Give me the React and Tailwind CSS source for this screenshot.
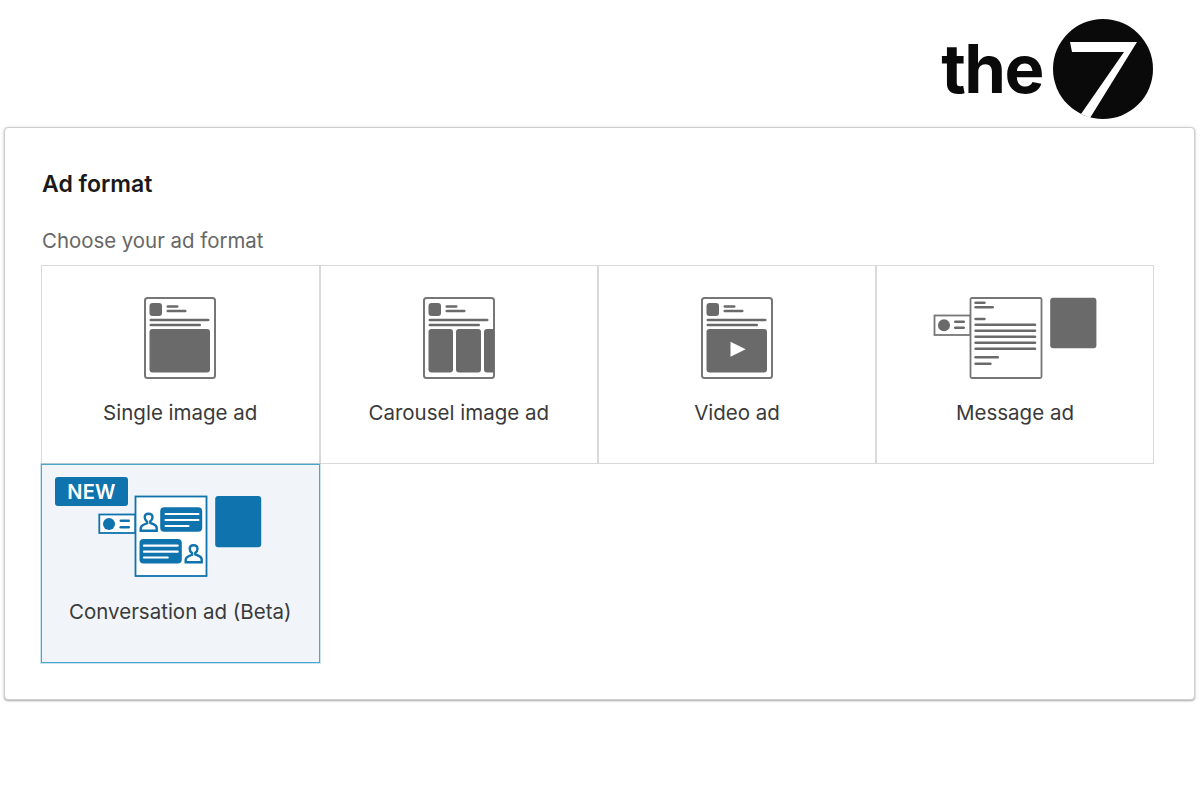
const GRAY = "#6a6a6a";
const BLUE = "#0f73ad";

function Bar({ x1, x2, y, h = 2.6, color = GRAY }) {
  return <rect x={x1} y={y - h / 2} width={x2 - x1} height={h} rx={h / 2} fill={color} />;
}

// shared top of the three post style icons
function PostFrame({ children }) {
  return (
    <svg width="74" height="82" viewBox="0 0 74 82" fill="none">
      <rect x="2" y="1" width="70" height="80" rx="2.5" fill="white" stroke="#767676" strokeWidth="2" />
      <rect x="6.500" y="6" width="12.500" height="13" rx="3" fill={GRAY} />
      <Bar x1={23.500} x2={35.500} y={9.500} />
      <Bar x1={23.500} x2={43.500} y={14} />
      <Bar x1={6.500} x2={66.500} y={23} />
      <Bar x1={6.500} x2={58} y={28} />
      {children}
    </svg>
  );
}

function SingleIcon() {
  return (
    <PostFrame>
      <rect x="6.500" y="32" width="60.500" height="43.500" rx="3" fill={GRAY} />
    </PostFrame>
  );
}

function CarouselIcon() {
  return (
    <PostFrame>
      <rect x="6.500" y="32" width="24.500" height="43.500" rx="3" fill={GRAY} />
      <rect x="34" y="32" width="25" height="43.500" rx="3" fill={GRAY} />
      <path d="M65 32h7v43.500h-7a3 3 0 0 1-3-3V35a3 3 0 0 1 3-3z" fill={GRAY} />
    </PostFrame>
  );
}

function VideoIcon() {
  return (
    <PostFrame>
      <rect x="6.500" y="32" width="60.500" height="43.500" rx="3" fill={GRAY} />
      <path d="M30.500 44.700L45.700 52.200L30.500 59.700z" fill="white" />
    </PostFrame>
  );
}

function MessageIcon() {
  return (
    <svg width="164" height="82" viewBox="0 0 164 82" fill="none">
      <rect x="1.500" y="18.500" width="36" height="19.500" fill="white" stroke="#767676" strokeWidth="1.800" />
      <circle cx="11" cy="28.200" r="6" fill={GRAY} />
      <Bar x1={21} x2={32} y={24.800} />
      <Bar x1={21} x2={32} y={30.800} />
      <rect x="37.500" y="1" width="71" height="80" rx="1.500" fill="white" stroke="#767676" strokeWidth="1.800" />
      <Bar x1={41.300} x2={52.700} y={5.700} />
      <Bar x1={41.300} x2={61} y={10.300} />
      <Bar x1={41.300} x2={52.700} y={22} />
      <Bar x1={41.300} x2={103.300} y={27.700} />
      <Bar x1={41.300} x2={103.300} y={33.700} />
      <Bar x1={41.300} x2={103.300} y={39.700} />
      <Bar x1={41.300} x2={103.300} y={45.700} />
      <Bar x1={41.300} x2={103.300} y={51.700} />
      <Bar x1={41.300} x2={66} y={60.300} />
      <Bar x1={41.300} x2={58.700} y={66.700} />
      <rect x="117.200" y="0.700" width="46.200" height="50.600" rx="3" fill={GRAY} />
    </svg>
  );
}

function Person({ x, y }) {
  return (
    <g transform={`translate(${x} ${y})`} stroke={BLUE} strokeWidth="2.400" fill="white">
      <path d="M1.200 18.200v-2.400c0-2 1.400-3 3.400-3.800l3-1.200v-1.600C6 8 5.200 6.400 5.200 4.800 5.200 2.400 6.800 1.200 9.100 1.200s3.900 1.200 3.900 3.600c0 1.600-.8 3.200-2.200 4v1.600l3 1.200c2 .8 3.400 1.800 3.400 3.800v2.800z" />
    </g>
  );
}

function ConversationIcon() {
  return (
    <svg width="164" height="82" viewBox="0 0 164 82" fill="none">
      <rect x="1.300" y="19.500" width="36" height="18.500" fill="white" stroke={BLUE} strokeWidth="1.800" />
      <circle cx="11" cy="29" r="6" fill={BLUE} />
      <Bar x1={21.500} x2={32} y={25.700} color={BLUE} />
      <Bar x1={21.500} x2={32} y={32.300} color={BLUE} />
      <rect x="37.500" y="1.500" width="71" height="79.500" fill="white" stroke={BLUE} strokeWidth="1.800" />
      <Person x={41.500} y={17.500} />
      <rect x="62.200" y="12.300" width="42" height="24.400" rx="4" fill={BLUE} />
      <Bar x1={66.500} x2={101.500} y={19} color="white" h={2.200} />
      <Bar x1={66.500} x2={101.500} y={25} color="white" h={2.200} />
      <Bar x1={66.500} x2={91.500} y={31} color="white" h={2.200} />
      <rect x="41.500" y="44" width="42.300" height="24.400" rx="4" fill={BLUE} />
      <Bar x1={44.800} x2={80.800} y={50.700} color="white" h={2.200} />
      <Bar x1={44.800} x2={80.800} y={56.700} color="white" h={2.200} />
      <Bar x1={44.800} x2={70.800} y={62.500} color="white" h={2.200} />
      <Person x={86.500} y={49} />
      <rect x="117.200" y="1" width="46" height="51.300" rx="3" fill={BLUE} />
    </svg>
  );
}

function FormatCell({ label, icon, selected }) {
  return (
    <div
      className={
        selected
          ? "relative h-[199px] flex flex-col items-center pt-[30px] border border-[#4aa7ca] bg-[#f1f5f9] shadow-[0_0_0_1px_rgba(80,170,205,0.3)]"
          : "relative h-[199px] flex flex-col items-center pt-[31px] border border-[#d9d9d9] bg-white"
      }
    >
      {selected && (
        <span className="absolute left-[13px] top-[12px] h-[29px] w-[73px] flex items-center justify-center rounded-[3px] bg-[#0f73ad] text-white text-[20px] font-semibold tracking-[0.3px]">
          NEW
        </span>
      )}
      <div className="h-[82px] flex items-center">{icon}</div>
      <div
        className={
          selected
            ? "mt-[21px] text-[20.500px] leading-[28px] text-[#3a3a3a] whitespace-nowrap"
            : "mt-[20px] text-[20.500px] leading-[28px] text-[#3a3a3a] whitespace-nowrap"
        }
      >
        {label}
      </div>
    </div>
  );
}

export default function App() {
  return (
    <div className="min-h-[800px] bg-white font-['Inter','Liberation_Sans',sans-serif]">
      {/* Logo */}
      <div className="h-[127px] flex justify-end items-start pr-[46px] pt-[18px]">
        <div className="flex items-center gap-[9px]">
          <span className="text-[67px] leading-[102px] font-bold tracking-[-1.500px] text-[#0a0a0a]">
            the
          </span>
          <svg width="102" height="102" viewBox="0 0 102 102">
            <circle cx="51" cy="51" r="50" fill="#0a0a0a" />
            <path d="M18 24H85L38 100L29 96L72 34H20z" fill="white" />
          </svg>
        </div>
      </div>

      {/* Card */}
      <div className="ml-[4px] mr-[5px] h-[573px] rounded-[4px] border border-[#cfcfcf] bg-white shadow-[0_1px_2px_rgba(0,0,0,0.3),0_0_4px_rgba(0,0,0,0.08)] pl-[36px] pr-[40px]">
        <h2 className="mt-[41px] ml-[1px] text-[23px] leading-[30px] font-semibold text-[#1a1a1a]">Ad format</h2>
        <p className="mt-[27px] ml-[1px] text-[20.400px] leading-[30px] text-[#666666]">Choose your ad format</p>
        <div className="mt-[9px] grid grid-cols-[278.500px_278.500px_278px_278px]">
          <FormatCell label="Single image ad" icon={<SingleIcon />} />
          <FormatCell label="Carousel image ad" icon={<CarouselIcon />} />
          <FormatCell label="Video ad" icon={<VideoIcon />} />
          <FormatCell label="Message ad" icon={<MessageIcon />} />
          <FormatCell label="Conversation ad (Beta)" icon={<ConversationIcon />} selected />
        </div>
      </div>
    </div>
  );
}
